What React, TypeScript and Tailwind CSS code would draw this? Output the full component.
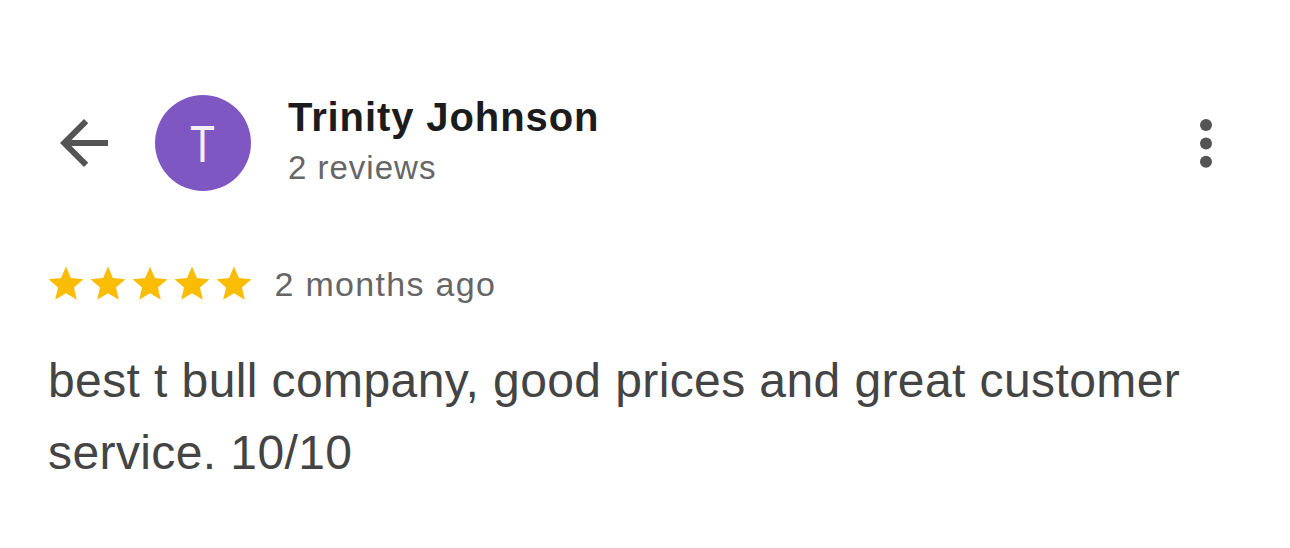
import React from 'react';

const STAR_PATH =
  'M12 17.27L18.18 21l-1.64-7.03L22 9.24l-7.19-.61L12 2 9.19 8.63 2 9.24l5.46 4.73L5.82 21z';

const Star: React.FC = () => (
  <svg width={42} height={42} viewBox="0 0 24 24" className="shrink-0">
    <path d={STAR_PATH} fill="#fbbc04" />
  </svg>
);

const BackArrow: React.FC = () => (
  <svg width={72} height={72} viewBox="0 0 24 24" className="shrink-0">
    <path d="M20 11H7.83l5.59-5.59L12 4l-8 8 8 8 1.41-1.41L7.83 13H20v-2z" fill="#545454" />
  </svg>
);

const MoreDots: React.FC = () => (
  <svg width={12} height={49} viewBox="0 0 12 49" className="shrink-0">
    <circle cx={6} cy={6} r={6} fill="#545454" />
    <circle cx={6} cy={24.4} r={6} fill="#545454" />
    <circle cx={6} cy={42.8} r={6} fill="#545454" />
  </svg>
);

export default function App() {
  return (
    <div className="w-[1290px] h-[548px] bg-white font-['Liberation_Sans',Arial,sans-serif] px-[48px] pt-[95px] overflow-hidden">
      {/* cabeçalho do autor */}
      <div className="flex items-center h-[96px]">
        <BackArrow />
        <div className="ml-[35px] w-[96px] h-[96px] rounded-full bg-[#7e57c2] flex items-center justify-center shrink-0">
          <span className="text-[51px] leading-none text-[#f7f0fc] scale-x-[0.8] mt-[3px]">T</span>
        </div>
        <div className="ml-[37px] flex flex-col">
          <span className="text-[40px] leading-[50px] font-bold text-[#1c1c1c] tracking-[0.9px]">Trinity Johnson</span>
          <span className="text-[33px] leading-[52px] text-[#666666] tracking-[1px]">2 reviews</span>
        </div>
        <div className="ml-auto mr-[30px]">
          <MoreDots />
        </div>
      </div>

      {/* nota e data */}
      <div className="flex items-center h-[42px] mt-[72px] -ml-[3.5px]">
        <Star />
        <Star />
        <Star />
        <Star />
        <Star />
        <span className="ml-[20px] text-[34px] leading-[34px] text-[#666666] tracking-[1.3px]">2 months ago</span>
      </div>

      {/* texto da avaliação */}
      <p className="mt-[40px] w-[1160px] text-[48px] leading-[72px] text-[#444444] tracking-[0.4px]">
        best t bull company, good prices and great customer service. 10/10
      </p>
    </div>
  );
}
